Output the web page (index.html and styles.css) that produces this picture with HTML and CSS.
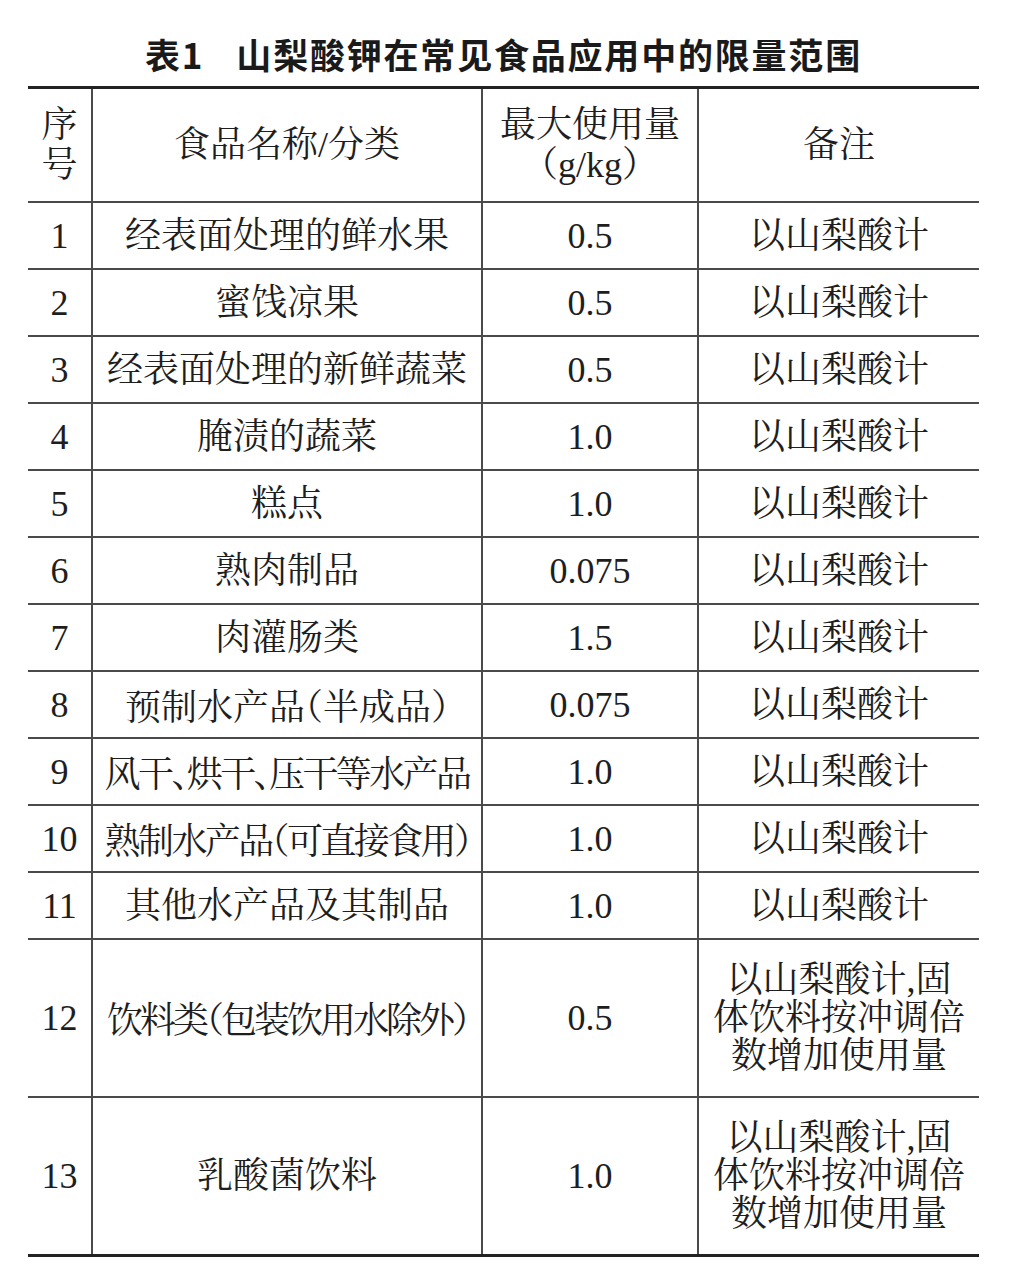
FILE: index.html
```html
<!DOCTYPE html>
<html lang="zh-CN">
<head>
<meta charset="utf-8">
<link rel="stylesheet" href="styles.css">
</head>
<body>
<div class="page">
  <h1 class="title">表1<span class="gap"></span>山梨酸钾在常见食品应用中的限量范围</h1>
  <table class="tbl">
    <colgroup>
      <col class="c1"><col class="c2"><col class="c3"><col class="c4">
    </colgroup>
    <thead>
      <tr class="head">
        <th class="stack">序<br>号</th>
        <th>食品名称/分类</th>
        <th class="two">最大使用量<br>（g/kg）</th>
        <th>备注</th>
      </tr>
    </thead>
    <tbody>
      <tr><td>1</td><td>经表面处理的鲜水果</td><td>0.5</td><td>以山梨酸计</td></tr>
      <tr><td>2</td><td>蜜饯凉果</td><td>0.5</td><td>以山梨酸计</td></tr>
      <tr><td>3</td><td>经表面处理的新鲜蔬菜</td><td>0.5</td><td>以山梨酸计</td></tr>
      <tr><td>4</td><td>腌渍的蔬菜</td><td>1.0</td><td>以山梨酸计</td></tr>
      <tr><td>5</td><td>糕点</td><td>1.0</td><td>以山梨酸计</td></tr>
      <tr><td>6</td><td>熟肉制品</td><td>0.075</td><td>以山梨酸计</td></tr>
      <tr><td>7</td><td>肉灌肠类</td><td>1.5</td><td>以山梨酸计</td></tr>
      <tr><td>8</td><td class="half">预制水产品（半成品）</td><td>0.075</td><td>以山梨酸计</td></tr>
      <tr><td>9</td><td class="half tight">风干、烘干、压干等水产品</td><td>1.0</td><td>以山梨酸计</td></tr>
      <tr><td>10</td><td class="half tight">熟制水产品（可直接食用）</td><td>1.0</td><td>以山梨酸计</td></tr>
      <tr><td>11</td><td>其他水产品及其制品</td><td>1.0</td><td>以山梨酸计</td></tr>
      <tr class="tall"><td>12</td><td class="half tighter">饮料类（包装饮用水除外）</td><td>0.5</td><td class="multi">以山梨酸计,固<br>体饮料按冲调倍<br>数增加使用量</td></tr>
      <tr class="tall"><td>13</td><td>乳酸菌饮料</td><td>1.0</td><td class="multi">以山梨酸计,固<br>体饮料按冲调倍<br>数增加使用量</td></tr>
    </tbody>
  </table>
</div>
</body>
</html>
```

FILE: styles.css
```css
html, body {
  margin: 0;
  padding: 0;
  background: #ffffff;
}

.page {
  width: 1012px;
  padding: 34px 0 0 28px;
  box-sizing: border-box;
  color: #1e1e1e;
}

.title {
  margin: 0 0 12px 0;
  width: 951px;
  text-align: center;
  font-family: "Noto Sans CJK SC", sans-serif;
  font-weight: 700;
  font-size: 35px;
  line-height: 40px;
  letter-spacing: 1.8px;
  color: #1a1a1a;
}

.title .gap {
  display: inline-block;
  width: 32px;
}

.tbl {
  border-collapse: collapse;
  table-layout: fixed;
  width: 951px;
  font-family: "Liberation Serif", "Noto Serif CJK SC", "Noto Sans CJK SC", serif;
  font-size: 36px;
  color: #1e1e1e;
  border-top: 3px solid #222;
  border-bottom: 3px solid #222;
}

.c1 { width: 64px; }
.c2 { width: 390px; }
.c3 { width: 216px; }
.c4 { width: 281px; }

.tbl th,
.tbl td {
  font-weight: 400;
  text-align: center;
  vertical-align: middle;
  padding: 0;
  border: 2px solid #4a4a4a;
  white-space: nowrap;
  line-height: 38px;
}

.tbl tr > :first-child { border-left: none; }
.tbl tr > :last-child { border-right: none; }
.tbl thead th { border-top: none; }
.tbl tbody tr:last-child td { border-bottom: none; }

.head th { height: 112px; }
.head .stack { line-height: 40px; }
.head .two { line-height: 40px; }

.tbl tbody td { height: 65px; }
.tbl tbody tr.tall td { height: 156px; }

.half {
  font-family: "Noto Serif CJK SC", "Liberation Serif", serif;
  font-feature-settings: "halt" 1;
}

.tight { letter-spacing: -2.6px; }
.tighter { letter-spacing: -3px; }

.multi { line-height: 40px; }
```
